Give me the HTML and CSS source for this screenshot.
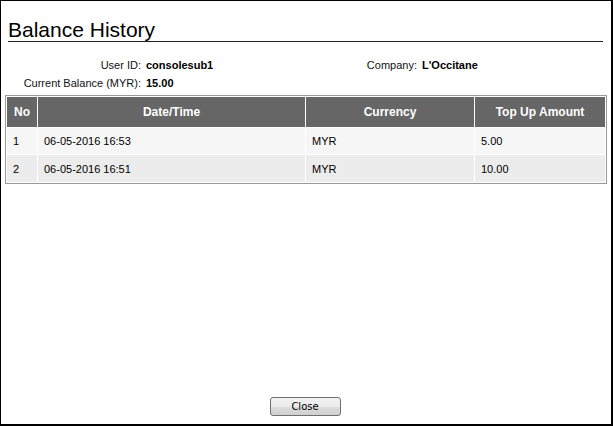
FILE: index.html
```html
<!DOCTYPE html>
<html lang="en">
<head>
    <meta charset="UTF-8">
    <title>Balance History</title>
    <link rel="stylesheet" href="styles.css">
</head>
<body>
    <div class="dialog">
        <h1 class="title">Balance History</h1>

        <table class="info">
            <tr>
                <td class="label">User ID:</td>
                <td class="value first">consolesub1</td>
                <td class="label second">Company:</td>
                <td class="value">L'Occitane</td>
            </tr>
            <tr>
                <td class="label">Current Balance (MYR):</td>
                <td class="value">15.00</td>
                <td></td>
                <td></td>
            </tr>
        </table>

        <table class="history">
            <thead>
                <tr>
                    <th class="col-no">No</th>
                    <th class="col-date">Date/Time</th>
                    <th class="col-currency">Currency</th>
                    <th class="col-amount">Top Up Amount</th>
                </tr>
            </thead>
            <tbody>
                <tr>
                    <td>1</td>
                    <td>06-05-2016 16:53</td>
                    <td>MYR</td>
                    <td>5.00</td>
                </tr>
                <tr class="alt">
                    <td>2</td>
                    <td>06-05-2016 16:51</td>
                    <td>MYR</td>
                    <td>10.00</td>
                </tr>
            </tbody>
        </table>

        <div class="footer">
            <button class="btn-close">Close</button>
        </div>
    </div>
</body>
</html>
```

FILE: styles.css
```css
* {
    margin: 0;
    padding: 0;
    box-sizing: border-box;
}

body {
    font-family: "Liberation Sans", Arial, sans-serif;
    font-size: 11px;
    color: #000;
    background: #fff;
}

.dialog {
    width: 613px;
    height: 426px;
    border: 1px solid #000;
    border-right-width: 2px;
    border-bottom-width: 2px;
    display: flex;
    flex-direction: column;
    padding: 0 4px 0 4px;
}

.title {
    font-size: 21px;
    font-weight: normal;
    margin: 17px 4px 0 3px;
    padding-bottom: 0;
    line-height: 23px;
    border-bottom: 1px solid #222;
}

.info {
    border-collapse: collapse;
    table-layout: fixed;
    width: 600px;
    margin: 14px 0 0 0;
}

.info td {
    height: 18px;
    padding: 0;
    vertical-align: middle;
    white-space: nowrap;
}

.info .label {
    width: 141px;
    text-align: right;
    padding-right: 5px;
    color: #111;
}

.info .value.first {
    width: 140px;
}

.info .label.second {
    width: 136px;
}

.info .value {
    font-weight: bold;
}

.history {
    width: 602px;
    margin-top: 3px;
    border: 1px solid #999;
    border-collapse: separate;
    border-spacing: 1px;
}

.history th {
    background: #666;
    color: #fff;
    font-weight: bold;
    font-size: 12px;
    height: 30px;
    text-align: center;
}

.history td {
    background: #f6f6f6;
    height: 26px;
    padding: 0 6px;
}

.history tr.alt td {
    background: #ececec;
    height: 27px;
}

.col-no {
    width: 30px;
}

.col-date {
    width: 267px;
}

.col-currency {
    width: 168px;
}

.footer {
    margin-top: auto;
    display: flex;
    justify-content: center;
    padding-bottom: 8px;
}

.btn-close {
    width: 71px;
    height: 19px;
    font-family: "DejaVu Sans", Tahoma, sans-serif;
    font-size: 10px;
    color: #000;
    border: 1px solid #707070;
    border-radius: 3px;
    background: linear-gradient(#f2f2f2 0%, #ebebeb 50%, #dddddd 51%, #cfcfcf 100%);
    margin-left: -2px;
}
```
